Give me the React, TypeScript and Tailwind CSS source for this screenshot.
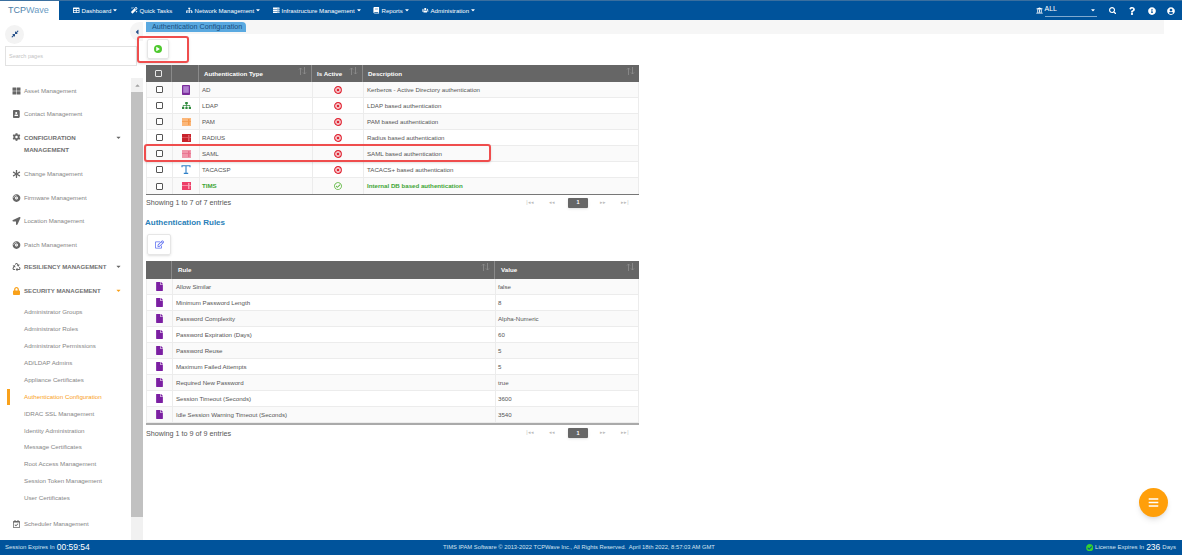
import React from 'react';
import {
  FaThLarge, FaAddressBook, FaCog, FaAsterisk, FaCompactDisc, FaLocationArrow, FaRecycle, FaLock, FaRegCalendarCheck,
  FaCompressAlt, FaCaretDown, FaCaretLeft, FaCaretUp, FaTable, FaMagic, FaSitemap, FaServer, FaBook, FaUsers, FaUniversity,
  FaSearch, FaQuestion, FaInfoCircle, FaUserCircle, FaCheckCircle, FaBars, FaPlay, FaFile, FaRegEdit, FaRegCheckCircle,
} from 'react-icons/fa';

const navItems = [
  { label: 'Dashboard', icon: FaTable, caret: true, w: 'w-[58px]' },
  { label: 'Quick Tasks', icon: FaMagic, caret: false, w: 'w-[55px]' },
  { label: 'Network Management', icon: FaSitemap, caret: true, w: 'w-[87px]' },
  { label: 'Infrastructure Management', icon: FaServer, caret: true, w: 'w-[100px]' },
  { label: 'Reports', icon: FaBook, caret: true, w: 'w-[49px]' },
  { label: 'Administration', icon: FaUsers, caret: true, w: 'w-[70px]' },
];

const authRows = [
  { type: 'AD', desc: 'Kerberos - Active Directory authentication', kind: 'ad' },
  { type: 'LDAP', desc: 'LDAP based authentication', kind: 'ldap' },
  { type: 'PAM', desc: 'PAM based authentication', kind: 'pam' },
  { type: 'RADIUS', desc: 'Radius based authentication', kind: 'radius' },
  { type: 'SAML', desc: 'SAML based authentication', kind: 'saml' },
  { type: 'TACACSP', desc: 'TACACS+ based authentication', kind: 'tacacs' },
  { type: 'TIMS', desc: 'Internal DB based authentication', kind: 'tims' },
];

const rules = [
  ['Allow Similar', 'false'],
  ['Minimum Password Length', '8'],
  ['Password Complexity', 'Alpha-Numeric'],
  ['Password Expiration (Days)', '60'],
  ['Password Reuse', '5'],
  ['Maximum Failed Attempts', '5'],
  ['Required New Password', 'true'],
  ['Session Timeout (Seconds)', '3600'],
  ['Idle Session Warning Timeout (Seconds)', '3540'],
];

const subItems = [
  'Administrator Groups', 'Administrator Roles', 'Administrator Permissions', 'AD/LDAP Admins', 'Appliance Certificates',
  'Authentication Configuration', 'IDRAC SSL Management', 'Identity Administration', 'Message Certificates',
  'Root Access Management', 'Session Token Management', 'User Certificates',
];

function TypeIcon({ kind }: { kind: string }) {
  if (kind === 'ad') {
    return (
      <svg width="8" height="10" viewBox="0 0 8 10">
        <rect width="8" height="10" rx="0.8" fill="#7b2d9b" />
        <rect x="1.2" y="1.2" width="5.6" height="6.6" fill="#b07fd0" />
      </svg>
    );
  }
  if (kind === 'ldap') return <FaSitemap className="text-[9px] text-[#2e8b3d]" />;
  if (kind === 'tacacs') {
    return (
      <svg width="10" height="9" viewBox="0 0 10 9" fill="none" stroke="#2f80c8" strokeWidth="1.1">
        <path d="M1 2.2V.8h8v1.4M5 .8v7.6M2.8 8.4h4.4" />
      </svg>
    );
  }
  const colors: Record<string, [string, string]> = {
    pam: ['#fbb77a', '#f59b4c'],
    radius: ['#c8232c', '#e0606a'],
    saml: ['#f097ab', '#e8708c'],
    tims: ['#ee3f68', '#f9a3b8'],
  };
  const [base, mark] = colors[kind];
  return (
    <svg width="9" height="8" viewBox="0 0 9 8">
      <rect width="9" height="8" fill={base} />
      <rect y="3" width="9" height="0.8" fill={mark} />
      <rect x="6" y="1" width="1.5" height="6" fill={mark} />
    </svg>
  );
}

function InactiveIcon() {
  return (
    <svg width="8" height="8" viewBox="0 0 8 8" fill="none" stroke="#e0202f" strokeWidth="1.2">
      <circle cx="4" cy="4" r="3.3" />
      <path d="M2.6 2.6l2.8 2.8M5.4 2.6 2.6 5.4" />
    </svg>
  );
}

function SortIcon() {
  return (
    <svg width="9" height="8" viewBox="0 0 9 8" fill="none" stroke="#8f8f8f" strokeWidth="0.8" className="absolute right-[4px] top-[2px]">
      <path d="M2.5 8V1M1 2.5 2.5 1 4 2.5M6.5 0v7M5 5.5 6.5 7 8 5.5" />
    </svg>
  );
}

function Check({ head }: { head?: boolean }) {
  return <span className={`block h-[7px] w-[7px] rounded-[1px] border ${head ? 'border-[#e8e8e8]' : 'border-[#555] bg-white'}`} />;
}

function HeadCell({ className, label, sort, children }: { className: string; label?: string; sort?: boolean; children?: React.ReactNode }) {
  return (
    <div className={`relative flex h-full items-center border-r border-[#8a8a8a] px-[5px] text-[6.2px] font-bold text-white last:border-r-0 ${className}`}>
      {label}
      {children}
      {sort && <SortIcon />}
    </div>
  );
}

function Pager() {
  return (
    <div className="mb-[2px] flex items-center text-[5px] text-[#bbb]">
      <span className="w-[22px] text-center">|◂◂</span>
      <span className="w-[22px] text-center">◂◂</span>
      <span className="mx-[5px] flex h-[10px] w-[20px] items-center justify-center rounded-[1px] bg-[#666] text-[5.5px] font-bold text-white shadow-sm">1</span>
      <span className="w-[20px] text-center">▸▸</span>
      <span className="w-[24px] text-center">▸▸|</span>
    </div>
  );
}

function SideRow({ icon: Icon, label, h, caps, caret, active }: { icon: React.ComponentType<{ className?: string }>; label: string; h: string; caps?: boolean; caret?: boolean; active?: boolean }) {
  return (
    <div className={`flex items-center pl-[12px] pr-[9px] ${h}`}>
      <Icon className={`mr-[3px] w-[9px] shrink-0 text-[8px] ${active ? 'text-[#f9a11b]' : 'text-[#666]'}`} />
      <span className={`flex-1 whitespace-nowrap ${caps ? 'text-[6.1px] font-bold text-[#707070]' : 'text-[6.1px] text-[#868686]'}`}>{label}</span>
      {caret && <FaCaretDown className={`text-[7px] ${active ? 'text-[#f9a11b]' : 'text-[#666]'}`} />}
    </div>
  );
}

export default function App() {
  return (
    <div className="flex h-[555px] w-[1182px] flex-col overflow-hidden bg-white font-['Liberation_Sans',Arial,sans-serif]">
      {/* top bar */}
      <header className="flex h-[20px] shrink-0 items-stretch border-t border-[#3a6f9f] bg-[#00539b]">
        <div className="flex w-[59px] items-center bg-white pl-[8px] text-[9px] text-[#4d7ea8]">
          TCP<span className="text-[#6b9cc4]">Wave</span>
        </div>
        <nav className="ml-[14px] flex flex-1 items-center text-[6.1px] text-white">
          {navItems.map((n) => (
            <div key={n.label} className={`flex items-center whitespace-nowrap ${n.w}`}>
              <n.icon className="mr-[2px] text-[6.5px]" />
              {n.label}
              {n.caret && <FaCaretDown className="ml-[1px] text-[6px]" />}
            </div>
          ))}
        </nav>
        <div className="flex items-center pr-[7px] text-white">
          <FaUniversity className="mr-[2px] text-[7px]" />
          <div className="mr-[12px] flex w-[52px] items-center justify-between border-b border-[#7fa9cf] pb-[1px] pr-[1px] text-[7px]">
            ALL
            <FaCaretDown className="text-[6px]" />
          </div>
          <FaSearch className="mr-[12px] text-[7.5px]" />
          <FaQuestion className="mr-[12px] text-[8px]" />
          <FaInfoCircle className="mr-[11px] text-[8px]" />
          <FaUserCircle className="text-[8px]" />
        </div>
      </header>

      <div className="flex min-h-0 flex-1">
        {/* sidebar */}
        <aside className="relative flex w-[143px] shrink-0 flex-col">
          <div className="flex h-[26px] items-center pl-[5px] pt-[2px]">
            <div className="flex h-[19px] w-[19px] items-center justify-center rounded-full bg-[#f3f3f3]">
              <FaCompressAlt className="text-[8px] text-[#26508a]" />
            </div>
          </div>
          <div className="absolute right-0 top-[2px] flex h-[19px] w-[13px] items-center justify-center rounded-l-full bg-[#f5f5f5]">
            <FaCaretLeft className="text-[8px] text-[#26508a]" />
          </div>
          <div className="mx-[5px] flex h-[20px] w-[132px] items-center border border-[#e2e2e2] pl-[3px] text-[5.5px] text-[#c4c4c4]">Search pages</div>
          <div className="flex min-h-0 flex-1 pt-[12px]">
            <div className="min-w-0 flex-1 overflow-hidden">
              <SideRow icon={FaThLarge} label="Asset Management" h="h-[23px] mt-[1px]" />
              <SideRow icon={FaAddressBook} label="Contact Management" h="h-[23px]" />
              <div className="flex h-[36.5px] pl-[12px] pr-[9px] pt-[7px]">
                <FaCog className="mr-[3px] mt-[1px] w-[9px] shrink-0 text-[8px] text-[#666]" />
                <span className="flex-1 text-[6.2px] font-bold leading-[11.5px] text-[#707070]">CONFIGURATION MANAGEMENT</span>
                <FaCaretDown className="mt-[2px] text-[7px] text-[#666]" />
              </div>
              <SideRow icon={FaAsterisk} label="Change Management" h="h-[24px]" />
              <SideRow icon={FaCompactDisc} label="Firmware Management" h="h-[24px]" />
              <SideRow icon={FaLocationArrow} label="Location Management" h="h-[22px]" />
              <SideRow icon={FaCompactDisc} label="Patch Management" h="h-[26px]" />
              <SideRow icon={FaRecycle} label="RESILIENCY MANAGEMENT" h="h-[18px] mb-[2px]" caps caret />
              <SideRow icon={FaLock} label="SECURITY MANAGEMENT" h="h-[26px]" caps caret active />
              <div>
                {subItems.map((s) => {
                  const active = s === 'Authentication Configuration';
                  return (
                    <div key={s} className="relative flex h-[16.9px] items-center whitespace-nowrap pl-[24px] text-[6.2px]">
                      {active && <span className="absolute left-[7px] top-[1px] h-[16px] w-[3px] bg-[#f9a11b]" />}
                      <span className={active ? 'text-[#f9a11b]' : 'text-[#868686]'}>{s}</span>
                    </div>
                  );
                })}
              </div>
              <div className="mt-[5.5px]">
                <SideRow icon={FaRegCalendarCheck} label="Scheduler Management" h="h-[24px]" />
              </div>
            </div>
            <div className="flex w-[12px] shrink-0 flex-col bg-[#f1f1f1]">
              <div className="flex h-[14px] items-center justify-center"><FaCaretUp className="text-[7px] text-[#a3a3a3]" /></div>
              <div className="h-[425px] bg-[#c1c1c1]" />
            </div>
          </div>
        </aside>

        {/* main */}
        <main className="relative min-w-0 flex-1">
          <div className="ml-[3px] mr-[18px] flex h-[14px] items-start bg-[#f6f6f6]">
            <div className="mt-[2px] flex h-[10px] items-center rounded-tr-[4px] bg-[#5aa9e0] pl-[6px] pr-[4px] text-[7.2px] text-[#174f80]">Authentication Configuration</div>
          </div>

          <div className="ml-[4px] mt-[5px] flex h-[20px] w-[22px] items-center justify-center rounded-[2px] border border-[#e6e6e6] shadow-sm">
            <div className="flex h-[8px] w-[8px] items-center justify-center rounded-full bg-[#4fc92f]">
              <FaPlay className="text-[4px] text-white" />
            </div>
          </div>

          <section className="ml-[3px] mt-[6px] w-[493px]">
            <div className="flex h-[17px] bg-[#666]">
              <HeadCell className="w-[26px] justify-center"><Check head /></HeadCell>
              <HeadCell className="w-[27px]" />
              <HeadCell className="w-[113px]" label="Authentication Type" sort />
              <HeadCell className="w-[51px]" label="Is Active" sort />
              <HeadCell className="flex-1" label="Description" sort />
            </div>
            <div className="border-b border-[#777]">
              {authRows.map((r, i) => {
                const green = r.kind === 'tims';
                return (
                  <div key={r.type} className={`flex h-[16px] border-x border-b border-[#ececec] text-[6.15px] last:border-b-0 ${i % 2 === 0 ? 'bg-[#fafafa]' : 'bg-white'} ${green ? 'font-bold text-[#3fa535]' : 'text-[#555]'}`}>
                    <div className="flex w-[26px] items-center justify-center border-r border-[#ececec]"><Check /></div>
                    <div className="flex w-[27px] items-center justify-center border-r border-[#ececec]"><TypeIcon kind={r.kind} /></div>
                    <div className="flex w-[113px] items-center border-r border-[#ececec] pl-[2px]">{r.type}</div>
                    <div className="flex w-[51px] items-center justify-center border-r border-[#ececec]">
                      {green ? <FaRegCheckCircle className="text-[8px] text-[#5ab53a]" /> : <InactiveIcon />}
                    </div>
                    <div className="flex flex-1 items-center pl-[3px]">{r.desc}</div>
                  </div>
                );
              })}
            </div>
            <div className="flex h-[17px] items-center justify-between pr-[2px]">
              <span className="text-[7.2px] text-[#555]">Showing 1 to 7 of 7 entries</span>
              <Pager />
            </div>
          </section>

          <h2 className="ml-[2px] mt-[5px] text-[8px] font-bold text-[#2a7fb8]">Authentication Rules</h2>

          <div className="ml-[4px] mt-[5px] flex h-[21px] w-[24px] items-center justify-center rounded-[2px] border border-[#e6e6e6] shadow-sm">
            <FaRegEdit className="text-[9px] text-[#5a6cf0]" />
          </div>

          <section className="ml-[3px] mt-[6px] w-[493px]">
            <div className="flex h-[18px] bg-[#666]">
              <HeadCell className="w-[26px]" />
              <HeadCell className="w-[323px] pl-[6px]" label="Rule" sort />
              <HeadCell className="flex-1 pl-[6px]" label="Value" sort />
            </div>
            <div className="border-b-2 border-[#aaa]">
              {rules.map(([rule, value], i) => (
                <div key={rule} className={`flex h-[16px] border-x border-b border-[#ececec] text-[6.15px] text-[#555] ${i % 2 === 0 ? 'bg-[#fafafa]' : 'bg-white'}`}>
                  <div className="flex w-[26px] items-center justify-center border-r border-[#ececec]"><FaFile className="text-[9px] text-[#7b1fa2]" /></div>
                  <div className="flex w-[323px] items-center border-r border-[#ececec] pl-[3px]">{rule}</div>
                  <div className="flex flex-1 items-center pl-[2px]">{value}</div>
                </div>
              ))}
            </div>
            <div className="flex h-[18px] items-center justify-between pr-[2px]">
              <span className="text-[7.2px] text-[#555]">Showing 1 to 9 of 9 entries</span>
              <Pager />
            </div>
          </section>

          {/* annotation boxes */}
          <div className="absolute left-[-6px] top-[16px] h-[27px] w-[52px] rounded-[3px] border-2 border-[#ef4d4d] shadow-sm" />
          <div className="absolute left-[1px] top-[124px] h-[18px] w-[347px] rounded-[3px] border-2 border-[#ef4d4d] shadow-sm" />

          <button className="absolute left-[996px] top-[468px] flex h-[29px] w-[29px] items-center justify-center rounded-full bg-[#ff9f0a] shadow-md">
            <FaBars className="text-[11px] text-white" />
          </button>
        </main>
      </div>

      {/* footer */}
      <footer className="relative flex h-[15px] shrink-0 items-center justify-between bg-[#00539b] pl-[5px] pr-[6px] text-[6px] text-[#d5e3f0]">
        <div className="flex items-center gap-[2px]">Session Expires In <span className="text-[8.5px] text-white">00:59:54</span></div>
        <div className="absolute left-[443px] whitespace-nowrap text-[5.8px]">TIMS IPAM Software © 2013-2022 TCPWave Inc., All Rights Reserved.&nbsp; April 18th 2022, 8:57:03 AM GMT</div>
        <div className="flex items-center gap-[2px]">
          <FaCheckCircle className="text-[7.5px] text-[#35d32f]" />
          License Expires In <span className="text-[8.5px] text-white">236</span> Days
        </div>
      </footer>
    </div>
  );
}
